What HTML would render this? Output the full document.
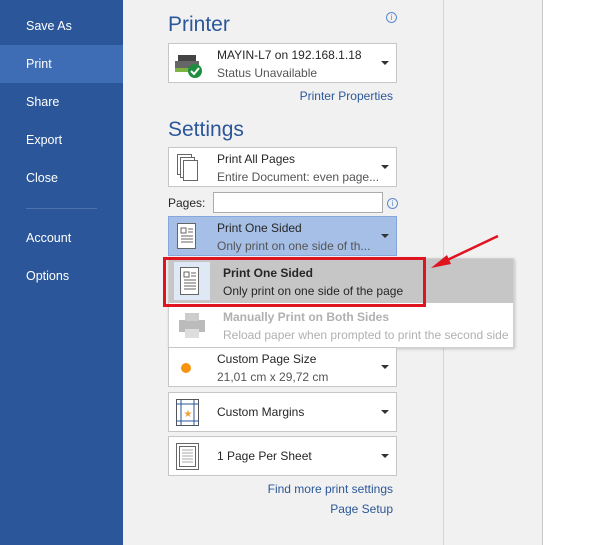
<!DOCTYPE html>
<html><head><style>
body{margin:0;width:601px;height:545px;overflow:hidden;background:#f1f1f1;font-family:"Liberation Sans",sans-serif;position:relative;font-size:12px;color:#262626}
.side{position:absolute;left:0;top:0;width:123px;height:545px;background:#2b579a}
.side div{position:absolute;left:26px;color:#fff;font-size:12.5px}
.sel{position:absolute;left:0;top:45px;width:123px;height:38px;background:#3e6db5}
.box{position:absolute;left:168px;width:227px;height:38px;border:1px solid #c6c6c6;background:#fff}
.t1{position:absolute;left:48px;top:4px;font-size:12px;color:#262626}
.t2{position:absolute;left:48px;top:22px;font-size:12px;color:#555}
.tc{position:absolute;left:48px;top:12px;font-size:12px}
.dd{position:absolute;right:7px;top:17px;width:0;height:0;border-left:4px solid transparent;border-right:4px solid transparent;border-top:4px solid #333}
h2{position:absolute;margin:0;font-weight:normal;font-size:21px;color:#2b579a;left:168px}
.lnk{position:absolute;right:208px;color:#2b579a;font-size:12px}
.info{position:absolute;width:9px;height:9px;border:1px solid #5b8bd0;border-radius:50%;font-size:8px;color:#5b8bd0;text-align:center;line-height:9px}
</style></head><body>
<div class="side"><div class="sel" style="left:0"></div>
<div style="top:19px">Save As</div><div style="top:57px">Print</div><div style="top:95px">Share</div><div style="top:133px">Export</div><div style="top:171px">Close</div>
<div style="top:208px;left:26px;width:71px;height:1px;background:#4c72ad"></div>
<div style="top:231px">Account</div><div style="top:269px">Options</div></div>
<div style="position:absolute;left:443px;top:0;width:1px;height:545px;background:#d6d6d6"></div>
<div style="position:absolute;left:542px;top:0;width:59px;height:545px;background:#fff;border-left:1px solid #c8c8c8"></div>
<h2 style="top:13px">Printer</h2><div class="info" style="left:386px;top:12px">i</div>
<div class="box" style="top:43px"><svg style="position:absolute;left:5px;top:8px" width="32" height="28"><rect x="4" y="3" width="18" height="6" fill="#444"/><rect x="1" y="9" width="24" height="10" fill="#666"/><rect x="1" y="16" width="18" height="4" fill="#7cb342"/><circle cx="21" cy="19" r="7" fill="#1e8e3e"/><path d="M17 19l3 3 5-6" stroke="#fff" stroke-width="2" fill="none"/></svg>
<div class="t1">MAYIN-L7 on 192.168.1.18</div><div class="t2">Status Unavailable</div><div class="dd"></div></div>
<div class="lnk" style="top:89px">Printer Properties</div>
<h2 style="top:118px">Settings</h2>
<div class="box" style="top:147px"><svg style="position:absolute;left:7px;top:5px" width="26" height="30" fill="#fff" stroke="#666"><rect x="1.5" y="1.5" width="14" height="20"/><rect x="4.5" y="4.5" width="14" height="20"/><rect x="7.5" y="7.5" width="14" height="20"/></svg>
<div class="t1">Print All Pages</div><div class="t2">Entire Document: even page...</div><div class="dd"></div></div>
<div style="position:absolute;left:168px;top:196px">Pages:</div>
<div style="position:absolute;left:213px;top:192px;width:168px;height:19px;background:#fff;border:1px solid #ababab"></div>
<div class="info" style="left:387px;top:198px">i</div>
<div class="box" style="top:216px;background:#a5bfe6;border-color:#86a7db"><svg style="position:absolute;left:7px;top:5px" width="26" height="30" fill="#fff" stroke="#666"><rect x="1.5" y="1.5" width="18" height="25"/><path d="M5 6h5v5H5zM12 7h5M12 10h5M5 14h12M5 17h12M5 20h12"/></svg>
<div class="t1">Print One Sided</div><div class="t2">Only print on one side of th...</div><div class="dd"></div></div>
<div style="position:absolute;left:168px;top:258px;width:344px;height:88px;background:#fff;border:1px solid #d0d0d0;box-shadow:1px 1px 3px rgba(0,0,0,.2)">
<div style="position:absolute;left:0;top:0;width:344px;height:44px;background:#c6c6c6"></div>
<div style="position:absolute;left:5px;top:3px;width:36px;height:38px;background:#dfe8f5"></div>
<svg style="position:absolute;left:10px;top:7px" width="26" height="32" fill="#fff" stroke="#666"><rect x="1.5" y="1.5" width="18" height="27"/><path d="M5 6h5v5H5zM12 7h5M12 10h5M5 14h12M5 17h12M5 20h12M5 23h12"/></svg>
<div style="position:absolute;left:54px;top:7px;font-weight:bold">Print One Sided</div>
<div style="position:absolute;left:54px;top:25px">Only print on one side of the page</div>
<svg style="position:absolute;left:8px;top:52px" width="30" height="28" fill="#bbb"><rect x="2" y="9" width="26" height="12"/><rect x="8" y="2" width="14" height="8" fill="#ccc"/><rect x="8" y="18" width="14" height="9" fill="#ddd"/></svg>
<div style="position:absolute;left:54px;top:51px;font-weight:bold;color:#b0b0b0">Manually Print on Both Sides</div>
<div style="position:absolute;left:54px;top:69px;color:#b0b0b0">Reload paper when prompted to print the second side</div>
</div>
<div style="position:absolute;left:163px;top:257px;width:257px;height:44px;border:3px solid #e0141e"></div>
<svg style="position:absolute;left:425px;top:230px" width="80" height="45"><path d="M73 6L16 33" stroke="#e0141e" stroke-width="2.5"/><path d="M6 38l16-13 4 9z" fill="#e0141e"/></svg>
<div class="box" style="top:347px"><div style="position:absolute;left:12px;top:15px;width:10px;height:10px;border-radius:50%;background:#f7930e"></div>
<div class="t1">Custom Page Size</div><div class="t2">21,01 cm x 29,72 cm</div><div class="dd"></div></div>
<div class="box" style="top:392px"><svg style="position:absolute;left:7px;top:5px" width="26" height="30" fill="none" stroke="#2b579a"><rect x="0.5" y="1.5" width="22" height="26" stroke="#555"/><path d="M0 6h23M0 23h23M5 1v27M18 1v27"/><text x="7.5" y="19" font-size="10" fill="#e8a33b" stroke="none">★</text></svg>
<div class="tc">Custom Margins</div><div class="dd"></div></div>
<div class="box" style="top:436px"><svg style="position:absolute;left:7px;top:5px" width="26" height="30" fill="none" stroke="#666"><rect x="0.5" y="1.5" width="22" height="26"/><rect x="3.5" y="4.5" width="16" height="20"/><path d="M6 8h11M6 11h11M6 14h11M6 17h11M6 20h11" stroke="#aaa"/></svg>
<div class="tc">1 Page Per Sheet</div><div class="dd"></div></div>
<div class="lnk" style="top:482px">Find more print settings</div>
<div class="lnk" style="top:502px">Page Setup</div>
</body></html>
